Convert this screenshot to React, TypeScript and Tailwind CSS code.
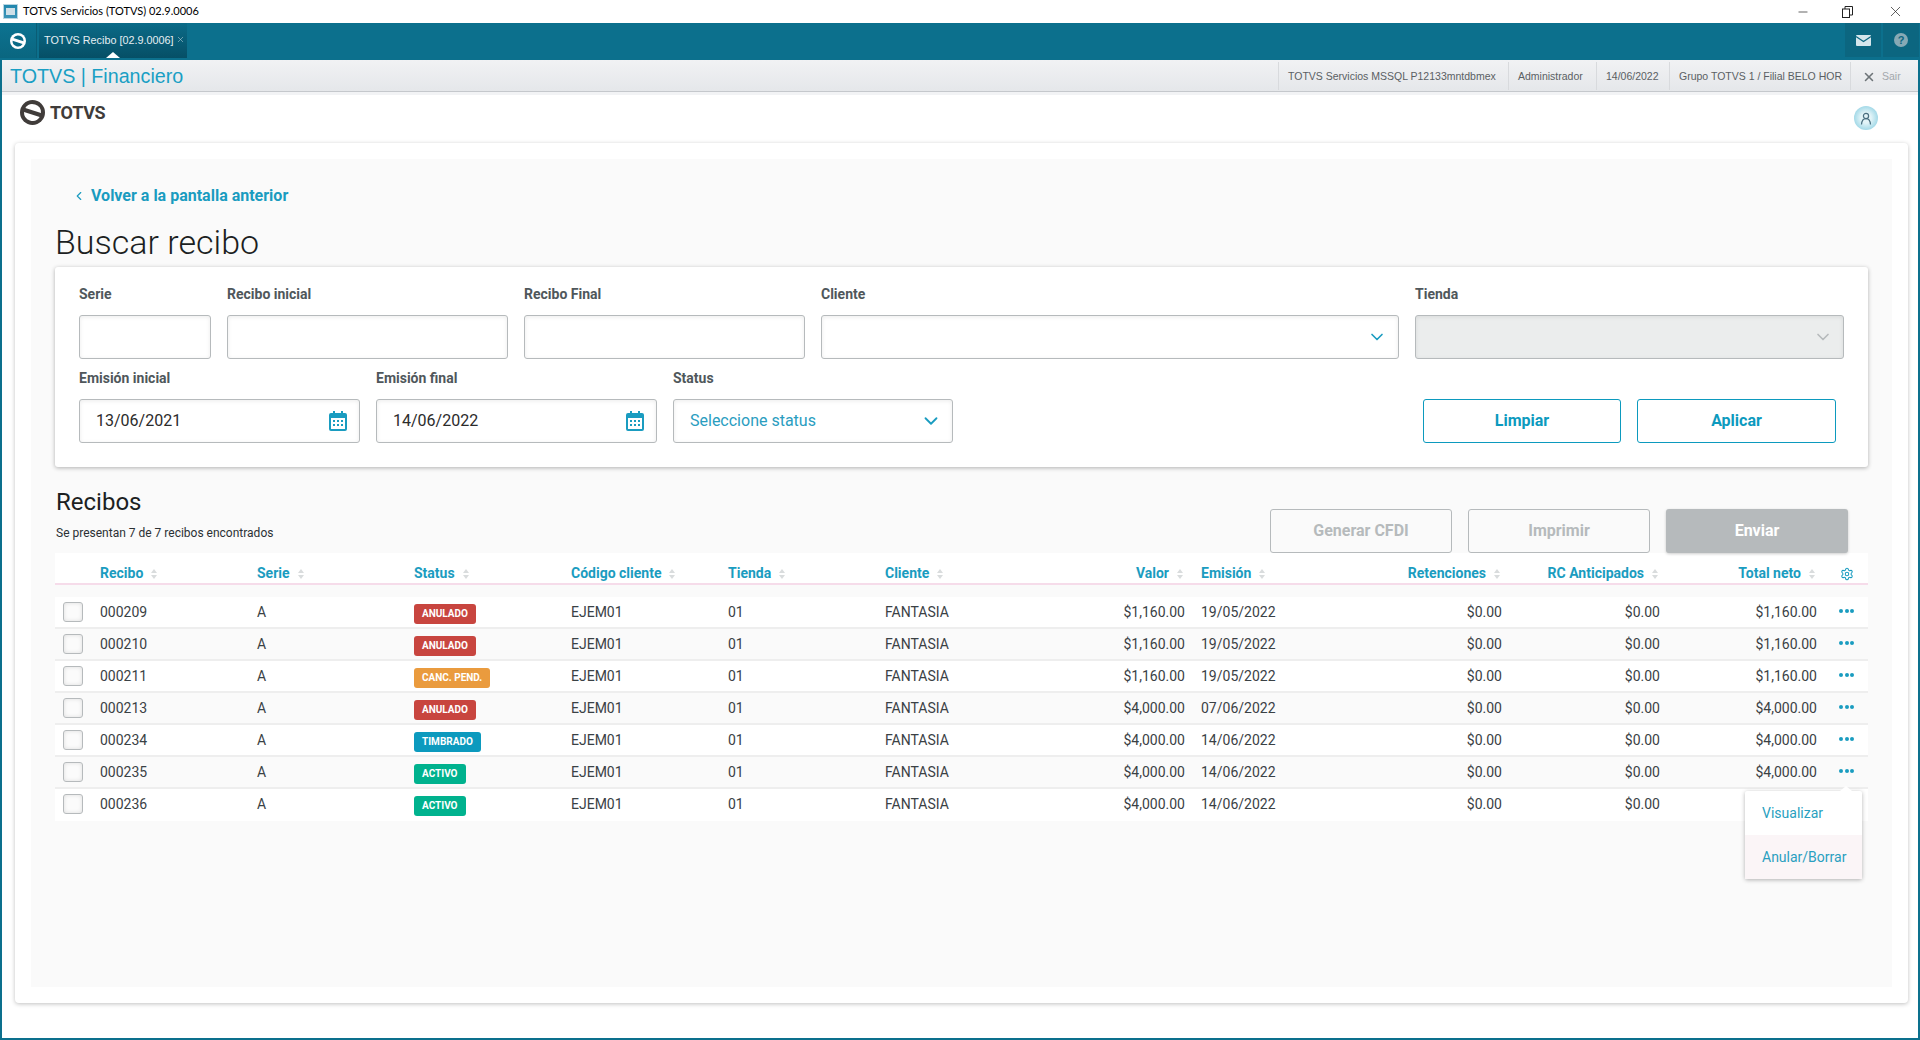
import { ChevronDown, ChevronLeft, Settings, X, Minus } from "lucide-react";

const rows = [
  ["000209", "ANULADO", "$1,160.00", "19/05/2022", "$1,160.00"],
  ["000210", "ANULADO", "$1,160.00", "19/05/2022", "$1,160.00"],
  ["000211", "CANC. PEND.", "$1,160.00", "19/05/2022", "$1,160.00"],
  ["000213", "ANULADO", "$4,000.00", "07/06/2022", "$4,000.00"],
  ["000234", "TIMBRADO", "$4,000.00", "14/06/2022", "$4,000.00"],
  ["000235", "ACTIVO", "$4,000.00", "14/06/2022", "$4,000.00"],
  ["000236", "ACTIVO", "$4,000.00", "14/06/2022", "$4,000.00"],
];

const badge: Record<string, string> = {
  ANULADO: "bg-[#c8453f]",
  "CANC. PEND.": "bg-[#ea9b3e]",
  TIMBRADO: "bg-[#0c9abe]",
  ACTIVO: "bg-[#00b28e]",
};

const grid = "grid grid-cols-[45px_157px_157px_157px_157px_157px_157px_159px_157px_160px_158px_157px_35px]";

function Sort() {
  return (
    <svg width="6" height="10" viewBox="0 0 6 10" className="ml-[8px] shrink-0">
      <path d="M3 0 6 4H0z" fill="#d9dcdd" />
      <path d="M3 10 0 6h6z" fill="#d9dcdd" />
    </svg>
  );
}

function Cal() {
  return (
    <svg width="18" height="20" viewBox="0 0 18 20">
      <path d="M4 0h2v2h6V0h2v2h2a2 2 0 0 1 2 2v14a2 2 0 0 1-2 2H2a2 2 0 0 1-2-2V4a2 2 0 0 1 2-2h2z" fill="#1a9cc0" />
      <rect x="2" y="7" width="14" height="11" fill="#fff" />
      <g fill="#1a9cc0">
        <rect x="4" y="9" width="2" height="2" /><rect x="8" y="9" width="2" height="2" /><rect x="12" y="9" width="2" height="2" />
        <rect x="4" y="13" width="2" height="2" /><rect x="8" y="13" width="2" height="2" /><rect x="12" y="13" width="2" height="2" />
      </g>
    </svg>
  );
}

function Logo({ color, bg, size }: { color: string; bg: string; size: number }) {
  return (
    <svg width={size} height={size} viewBox="0 0 24 24" className="shrink-0">
      <circle cx="12" cy="12" r="12" fill={color} />
      <g transform="rotate(15 12 12)">
        <path d="M4.2 9.6A8.2 8.2 0 0 1 20 10.3Z" fill={bg} />
        <path d="M19.8 14.4A8.2 8.2 0 0 1 4 13.7Z" fill={bg} />
      </g>
    </svg>
  );
}

function Field({ label, w, children }: { label: string; w: string; children?: React.ReactNode }) {
  return (
    <div className={w}>
      <div className="h-[32px] text-[14px] leading-[22px] font-bold text-[#4f575b]">{label}</div>
      {children ?? <Box />}
    </div>
  );
}

function Box({ children, className = "bg-white" }: { children?: React.ReactNode; className?: string }) {
  return (
    <div className={`h-[44px] rounded-[3px] border border-[#b6babc] shadow-[inset_0_1px_4px_rgba(0,0,0,0.08)] flex items-center justify-between text-[16px] ${className}`}>
      {children}
    </div>
  );
}

export default function App() {
  return (
    <div className="h-[1040px] w-[1920px] overflow-hidden flex flex-col bg-white font-['Roboto',sans-serif] text-[#3a4145]">
      {/* window title bar */}
      <div className="h-[23px] shrink-0 flex items-center bg-white">
        <div className="ml-[3px] w-[15px] h-[15px] bg-gradient-to-b from-[#1f86ad] to-[#3d95b8] border border-[#b9d6e2] flex items-center justify-center">
          <div className="w-[9px] h-[7px] bg-[#cfe0e8]" />
        </div>
        <span className="ml-[5px] text-[11px] font-['Lato',sans-serif] text-black">TOTVS Servicios (TOTVS) 02.9.0006</span>
        <div className="ml-auto flex items-center text-[#222]">
          <Minus size={14} strokeWidth={1.2} className="mr-[32px]" />
          <svg width="11" height="12" viewBox="0 0 11 12" className="mr-[34px]" fill="none" stroke="#222"><rect x="0.5" y="3" width="7" height="8.5" /><path d="M3 3V.5h7.5V9H8" /></svg>
          <X size={17} strokeWidth={1} className="mr-[16px]" />
        </div>
      </div>
      {/* teal bar */}
      <div className="h-[37px] shrink-0 bg-[#0c708d] flex items-start">
        <div className="w-[37px] h-[35px] bg-gradient-to-b from-[#0c7391] to-[#0a6680] border-r border-[#0a5d75] flex items-center justify-center">
          <Logo color="#ffffff" bg="#0b6b87" size={16} />
        </div>
        <div className="relative ml-[2px] w-[148px] h-[35px] bg-gradient-to-b from-[#0b6b88] to-[#064f66] flex items-center pl-[5px] text-[10.8px] whitespace-nowrap font-['Liberation_Sans',sans-serif] text-[#e6eff3]">
          TOTVS Recibo [02.9.0006]
          <X size={9} strokeWidth={1.5} className="ml-[3px] -mt-[3px] text-[#b9d2db]" />
          <div className="absolute left-[67px] bottom-0 w-0 h-0 border-x-[7px] border-x-transparent border-b-[6px] border-b-white" />
        </div>
        <div className="ml-auto flex gap-[2px] mr-[1px]">
          <div className="w-[36px] h-[34px] bg-[#0c6680] flex items-center justify-center">
            <svg width="15" height="11" viewBox="0 0 15 11">
              <rect width="15" height="11" rx="1" fill="#d6e6ec" />
              <path d="M0 1.5 7.5 6.5 15 1.5" fill="none" stroke="#0c6680" strokeWidth="1.2" />
            </svg>
          </div>
          <div className="w-[36px] h-[34px] bg-[#0c6680] flex items-center justify-center">
            <div className="w-[14px] h-[14px] rounded-full bg-[#87a9b5] text-[#0c6680] text-[11px] font-bold leading-[14px] text-center font-['Liberation_Sans',sans-serif]">?</div>
          </div>
        </div>
      </div>
      {/* body framed by the teal window border */}
      <div className="flex-1 flex flex-col border-x-2 border-b-2 border-[#0c708d] min-h-0">
        <div className="h-[32px] shrink-0 bg-gradient-to-b from-[#f1f2f4] to-[#e5e7ea] border-b border-[#c5c8cc] flex items-center font-['Liberation_Sans',sans-serif]">
          <span className="ml-[8px] text-[19.7px] text-[#1a9fc4] pt-[3px]">TOTVS | Financiero</span>
          <div className="ml-auto flex items-center h-[28px] text-[10.5px] text-[#5a5f63] whitespace-nowrap">
            <span className="w-[230px] border-l border-[#d8dadd] h-full flex items-center pl-[9px] pt-[2px]">TOTVS Servicios MSSQL P12133mntdbmex</span>
            <span className="w-[88px] border-l border-[#d8dadd] h-full flex items-center pl-[9px] pt-[2px]">Administrador</span>
            <span className="w-[73px] border-l border-[#d8dadd] h-full flex items-center pl-[9px] pt-[2px]">14/06/2022</span>
            <span className="w-[181px] border-l border-[#d8dadd] h-full flex items-center pl-[9px] pt-[2px]">Grupo TOTVS 1 / Filial BELO HOR</span>
            <span className="w-[68px] border-l border-[#d8dadd] h-full flex items-center pl-[11px] pt-[2px] text-[#a3a8ac]">
              <X size={14} strokeWidth={2.6} className="text-[#6d7478] mr-[6px]" />Sair
            </span>
          </div>
        </div>
        <div className="h-[3px] shrink-0 bg-[#f2f3f5]" />
        {/* logo row */}
        <div className="h-[48px] shrink-0 flex items-start justify-between pl-[18px] pr-[40px] pt-[5px]">
          <div className="flex items-center gap-[5px]">
            <Logo color="#403c3a" bg="#ffffff" size={25} />
            <span className="text-[18px] font-bold text-[#403c3a] leading-[25px] tracking-[-0.3px]">TOTVS</span>
          </div>
          <div className="mt-[6px] w-[24px] h-[24px] rounded-full bg-[radial-gradient(circle,#e2f4f8_30%,#77c6dc_100%)] flex items-center justify-center">
            <svg width="12" height="13" viewBox="0 0 12 13" fill="none" stroke="#4a6f80" strokeWidth="1.2">
              <circle cx="6" cy="4" r="2.6" />
              <path d="M1.5 12.5C1.8 8.5 4 6.6 6 6.6S10.2 8.5 10.5 12.5" />
            </svg>
          </div>
        </div>
        {/* card */}
        <div className="ml-[13px] mr-[10px] h-[860px] shrink-0 rounded-[4px] bg-white shadow-[0_1px_4px_rgba(0,0,0,0.25)] p-[16px]">
          <div className="h-full bg-[#fafafa] px-[24px] pt-[26px] relative">
            <div className="flex items-center h-[22px] pl-[17px] text-[16px] font-bold text-[#1a9cc0]">
              <ChevronLeft size={14} className="mr-[5px]" />
              Volver a la pantalla anterior
            </div>
            <h1 className="mt-[11px] h-[48px] text-[34px] leading-[48px] font-light text-[#1c1f22]">Buscar recibo</h1>
            {/* filters */}
            <div className="mt-[1px] h-[200px] bg-white rounded-[3px] shadow-[0_1px_4px_rgba(0,0,0,0.3)] px-[24px] pt-[16px]">
              <div className="flex gap-[16px]">
                <Field label="Serie" w="w-[132px]" />
                <Field label="Recibo inicial" w="w-[281px]" />
                <Field label="Recibo Final" w="w-[281px]" />
                <Field label="Cliente" w="w-[578px]">
                  <Box className="bg-white pr-[11px] justify-end"><ChevronDown size={20} className="text-[#1a9cc0]" /></Box>
                </Field>
                <Field label="Tienda" w="w-[429px]">
                  <Box className="bg-[#ebeded] pr-[10px] justify-end"><ChevronDown size={20} className="text-[#b6babc]" /></Box>
                </Field>
              </div>
              <div className="flex gap-[16px] mt-[8px]">
                <Field label="Emisión inicial" w="w-[281px]">
                  <Box className="bg-white pl-[16px] pr-[12px] text-[#2b2b2b]">13/06/2021<Cal /></Box>
                </Field>
                <Field label="Emisión final" w="w-[281px]">
                  <Box className="bg-white pl-[16px] pr-[12px] text-[#2b2b2b]">14/06/2022<Cal /></Box>
                </Field>
                <Field label="Status" w="w-[280px]">
                  <Box className="bg-white pl-[16px] pr-[10px] text-[#2a9dbf]">Seleccione status<ChevronDown size={22} className="text-[#1a9cc0]" /></Box>
                </Field>
                <div className="ml-auto mr-[8px] mt-[32px] flex gap-[16px]">
                  <button className="w-[198px] h-[44px] rounded-[3px] border border-[#0c9abe] bg-white text-[16px] font-bold text-[#0c9abe]">Limpiar</button>
                  <button className="w-[199px] h-[44px] rounded-[3px] border border-[#0c9abe] bg-white text-[16px] font-bold text-[#0c9abe]">Aplicar</button>
                </div>
              </div>
            </div>
            {/* heading + actions */}
            <div className="h-[86px] flex justify-between">
              <div className="pl-[1px]">
                <h2 className="mt-[19px] h-[32px] text-[24px] leading-[32px] font-normal text-[#1c1f22]">Recibos</h2>
                <p className="mt-[7px] text-[12px] leading-[16px] text-[#2b3034]">Se presentan 7 de 7 recibos encontrados</p>
              </div>
              <div className="mt-[42px] mr-[20px] flex gap-[16px] h-[44px]">
                <button className="w-[182px] rounded-[3px] border border-[#b6babc] text-[16px] font-bold text-[#b6babc]">Generar CFDI</button>
                <button className="w-[182px] rounded-[3px] border border-[#b6babc] text-[16px] font-bold text-[#b6babc]">Imprimir</button>
                <button className="w-[182px] rounded-[3px] bg-[#b6babc] text-[16px] font-bold text-white shadow-[0_1px_3px_rgba(0,0,0,0.2)]">Enviar</button>
              </div>
            </div>
            {/* table */}
            <div className={`${grid} h-[32px] pt-[10px] bg-white border-b-2 border-[#f6dcea] text-[14px] font-bold text-[#1a9cc0] items-center`}>
              <div />
              {["Recibo", "Serie", "Status", "Código cliente", "Tienda", "Cliente"].map((h) => (
                <div key={h} className="flex items-center">{h}<Sort /></div>
              ))}
              <div className="flex items-center justify-end pr-[18px]">Valor<Sort /></div>
              <div className="flex items-center">Emisión<Sort /></div>
              <div className="flex items-center justify-end pr-[18px]">Retenciones<Sort /></div>
              <div className="flex items-center justify-end pr-[18px]">RC Anticipados<Sort /></div>
              <div className="flex items-center justify-end pr-[18px]">Total neto<Sort /></div>
              <div className="flex justify-start pl-[7px]"><Settings size={14} strokeWidth={1.8} /></div>
            </div>
            <div className="mt-[12px]">
              {rows.map((r, i) => (
                <div key={r[0]} className={`${grid} h-[32px] items-center text-[14px] border-b-2 ${i < 6 ? "border-[#eeeeee]" : "border-transparent"} ${i % 2 === 0 ? "bg-white" : "bg-[#fafafa]"}`}>
                  <div className="pl-[8px]">
                    <div className="w-[20px] h-[20px] rounded-[3px] border border-[#b6babc] bg-[#fbfbfb] shadow-[inset_0_0_4px_rgba(0,0,0,0.12)]" />
                  </div>
                  <div>{r[0]}</div>
                  <div>A</div>
                  <div>
                    <span className={`inline-flex h-[20px] mt-[3px] items-center rounded-[3px] px-[8px] text-[10px] font-bold text-white ${badge[r[1]]}`}>{r[1]}</span>
                  </div>
                  <div>EJEM01</div>
                  <div>01</div>
                  <div>FANTASIA</div>
                  <div className="text-right pr-[16px]">{r[2]}</div>
                  <div>{r[3]}</div>
                  <div className="text-right pr-[16px]">$0.00</div>
                  <div className="text-right pr-[16px]">$0.00</div>
                  <div className="text-right pr-[16px]">{i < 6 ? r[4] : ""}</div>
                  <div className="pl-[6px] flex gap-[1.5px] -mt-[2px]">
                    {i < 6 && (
                      <>
                        <span className="w-[4px] h-[4px] rounded-full bg-[#1a9cc0]" />
                        <span className="w-[4px] h-[4px] rounded-full bg-[#1a9cc0]" />
                        <span className="w-[4px] h-[4px] rounded-full bg-[#1a9cc0]" />
                      </>
                    )}
                  </div>
                </div>
              ))}
            </div>
            {/* popup */}
            <div className="absolute left-[1714px] top-[632px] w-[117px] h-[88px] bg-white shadow-[0_1px_4px_rgba(0,0,0,0.3)] rounded-[2px] text-[14px] text-[#2a9fc0]">
              <div className="absolute -top-[5px] right-[10px] w-0 h-0 border-x-[6px] border-x-transparent border-b-[5px] border-b-white" />
              <div className="h-[44px] pl-[17px] flex items-center">Visualizar</div>
              <div className="h-[44px] pl-[17px] flex items-center bg-[#fbf5f7]">Anular/Borrar</div>
            </div>
          </div>
        </div>
      </div>
    </div>
  );
}
